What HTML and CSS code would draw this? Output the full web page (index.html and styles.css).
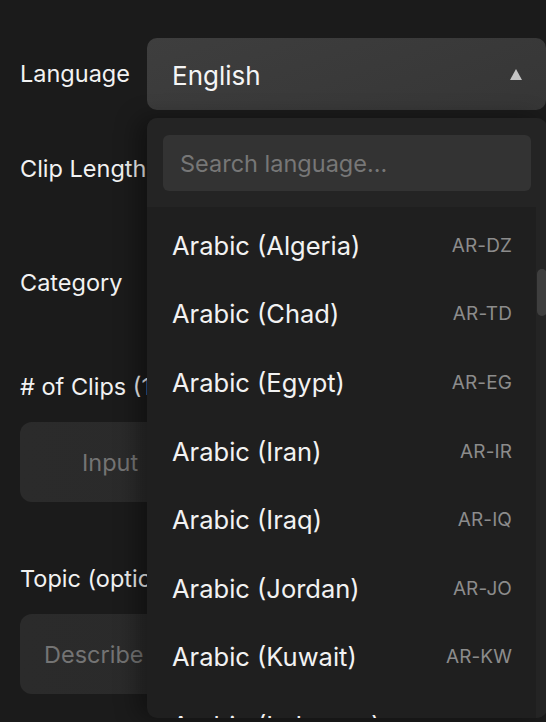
FILE: index.html
```html
<!DOCTYPE html>
<html lang="en">
<head>
<meta charset="utf-8">
<title>Clip settings</title>
<link rel="stylesheet" href="styles.css">
</head>
<body>
<div class="page">
  <div class="row row-lang">
    <div class="label">Language</div>
    <div class="field">
      <div class="select">
        <span class="select-value">English</span>
        <span class="caret"></span>
      </div>
    </div>
  </div>
  <div class="row row-clip">
    <div class="label">Clip Length</div>
    <div class="field"></div>
  </div>
  <div class="row row-cat">
    <div class="label">Category</div>
    <div class="field"></div>
  </div>
  <div class="stack stack-clips">
    <div class="label">#&nbsp;of Clips (1–10)</div>
    <div class="box box-input">Input</div>
  </div>
  <div class="stack stack-topic">
    <div class="label">Topic (optional)</div>
    <div class="box box-text">Describe a topic</div>
  </div>

  <div class="dropdown">
    <div class="dd-head">
      <div class="search">Search language...</div>
    </div>
    <div class="dd-body">
      <ul class="list">
        <li class="item"><span class="name">Arabic (Algeria)</span><span class="code">AR-DZ</span></li>
        <li class="item"><span class="name">Arabic (Chad)</span><span class="code">AR-TD</span></li>
        <li class="item"><span class="name">Arabic (Egypt)</span><span class="code">AR-EG</span></li>
        <li class="item"><span class="name">Arabic (Iran)</span><span class="code">AR-IR</span></li>
        <li class="item"><span class="name">Arabic (Iraq)</span><span class="code">AR-IQ</span></li>
        <li class="item"><span class="name">Arabic (Jordan)</span><span class="code">AR-JO</span></li>
        <li class="item"><span class="name">Arabic (Kuwait)</span><span class="code">AR-KW</span></li>
        <li class="item"><span class="name">Arabic (Lebanon)</span><span class="code">AR-LB</span></li>
      </ul>
      <div class="scrollbar"><div class="thumb"></div></div>
    </div>
  </div>
</div>
</body>
</html>
```
FILE: styles.css
```css
* { box-sizing: border-box; }
html, body {
  margin: 0;
  padding: 0;
  width: 546px;
  height: 722px;
  overflow: hidden;
  background: #1b1b1b;
  font-family: Inter, "Liberation Sans", sans-serif;
  color: #f2f2f2;
}
.page {
  position: relative;
  padding: 38px 0 0 20px;
  width: 546px;
  height: 722px;
}
.row {
  display: flex;
  align-items: center;
  height: 72px;
}
.row-clip { margin-top: 23px; }
.row-cat { margin-top: 42px; }
.label {
  font-size: 23.5px;
  line-height: 30px;
  color: #f2f2f2;
  white-space: nowrap;
}
.row .label { width: 127px; flex: none; }
.field { flex: 1; height: 72px; }
.select {
  height: 72px;
  border-radius: 10px;
  background: linear-gradient(160deg, #3e3e3e 0%, #363636 100%);
  display: flex;
  align-items: center;
  justify-content: space-between;
  padding: 0 24px 0 25px;
}
.select-value { font-size: 26px; color: #f5f5f5; padding-top: 2px; }
.caret {
  width: 0; height: 0;
  border-left: 6px solid transparent;
  border-right: 6px solid transparent;
  border-bottom: 11px solid #c4c4c4;
}
.stack { display: flex; flex-direction: column; }
.stack-clips { margin-top: 53px; }
.stack-topic { margin-top: 62px; }
.stack .label { margin-bottom: 20px; }
.box {
  height: 80px;
  width: 506px;
  border-radius: 12px;
  background: linear-gradient(90deg, #2b2b2b 0%, #282828 100%);
  display: flex;
  align-items: center;
  font-size: 23.5px;
  color: #747474;
}
.box-input { padding-left: 62px; }
.box-text { padding-left: 24px; }

.dropdown {
  position: absolute;
  left: 147px;
  top: 118px;
  width: 400px;
  height: 600px;
  border-radius: 10px;
  overflow: hidden;
  background: #1f1f1f;
  box-shadow: -10px 0 22px rgba(0, 0, 0, 0.35);
  display: flex;
  flex-direction: column;
}
.dd-head {
  background: #242424;
  padding: 17px 16px 16px 16px;
  flex: none;
}
.search {
  height: 56px;
  border-radius: 6px;
  background: #333333;
  display: flex;
  align-items: center;
  padding-left: 17px;
  font-size: 23.5px;
  color: #777777;
}
.dd-body {
  flex: 1;
  display: flex;
  min-height: 0;
}
.list {
  list-style: none;
  margin: 0;
  padding: 4px 0 0 0;
  flex: 1;
  overflow: hidden;
}
.item {
  height: 68.6px;
  display: flex;
  align-items: center;
  justify-content: space-between;
  padding: 0 24px 0 25px;
}
.name { font-size: 25.5px; color: #f2f2f2; }
.code { font-size: 19px; color: #8c8c8c; letter-spacing: 0.1px; }
.scrollbar {
  width: 11px;
  flex: none;
  background: #242424;
  padding-top: 62px;
}
.thumb {
  width: 10px;
  margin-left: 1px;
  height: 47px;
  border-radius: 5px;
  background: #3e3e3e;
}
```
